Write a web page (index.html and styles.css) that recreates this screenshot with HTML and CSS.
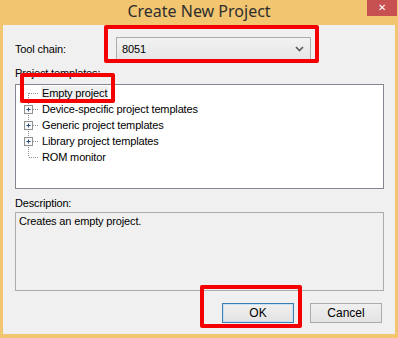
FILE: index.html
```html
<!DOCTYPE html>
<html lang="en">
<head>
  <meta charset="UTF-8" />
  <title>Create New Project</title>
  <link rel="stylesheet" href="styles.css">
</head>
<body>
  <div class="window">
    <div class="titlebar">
      <span></span>
      <span class="title">Create New Project</span>
      <span class="close">&#x2715;</span>
    </div>
    <div class="panel">
      <div class="row">
        <label class="lbl">Tool chain:</label>
        <div class="select">
          <span>8051</span>
          <svg width="9" height="6" viewBox="0 0 9 6"><path d="M1 1 L4.5 4.5 L8 1" fill="none" stroke="#5a5a5a" stroke-width="1.6"/></svg>
        </div>
      </div>

      <div class="lbl top">Project templates:</div>
      <div class="tree">
        <div class="node">
          <svg class="gut" width="24" height="16"><path d="M12.5 8 V16 M13 8.5 H23" stroke="#8c8c8c" stroke-dasharray="1 1" fill="none"/></svg>
          <span class="sel">Empty project</span>
        </div>
        <div class="node">
          <svg class="gut" width="24" height="16"><path d="M12.5 0 V16 M17 8.5 H23" stroke="#8c8c8c" stroke-dasharray="1 1" fill="none"/><rect x="8.5" y="4.5" width="8" height="8" fill="#fafafa" stroke="#8e8f8f"/><path d="M10.5 8.5 H14.5 M12.5 6.5 V10.5" stroke="#2c4b7e"/></svg>
          <span>Device-specific project templates</span>
        </div>
        <div class="node">
          <svg class="gut" width="24" height="16"><path d="M12.5 0 V16 M17 8.5 H23" stroke="#8c8c8c" stroke-dasharray="1 1" fill="none"/><rect x="8.5" y="4.5" width="8" height="8" fill="#fafafa" stroke="#8e8f8f"/><path d="M10.5 8.5 H14.5 M12.5 6.5 V10.5" stroke="#2c4b7e"/></svg>
          <span>Generic project templates</span>
        </div>
        <div class="node">
          <svg class="gut" width="24" height="16"><path d="M12.5 0 V16 M17 8.5 H23" stroke="#8c8c8c" stroke-dasharray="1 1" fill="none"/><rect x="8.5" y="4.5" width="8" height="8" fill="#fafafa" stroke="#8e8f8f"/><path d="M10.5 8.5 H14.5 M12.5 6.5 V10.5" stroke="#2c4b7e"/></svg>
          <span>Library project templates</span>
        </div>
        <div class="node">
          <svg class="gut" width="24" height="16"><path d="M12.5 0 V8 M13 8.5 H23" stroke="#8c8c8c" stroke-dasharray="1 1" fill="none"/></svg>
          <span>ROM monitor</span>
        </div>
      </div>

      <div class="lbl desc-lbl">Description:</div>
      <div class="desc">Creates an empty project.</div>

      <div class="buttons">
        <button class="btn default">OK</button>
        <button class="btn">Cancel</button>
      </div>

      <!-- red annotation marks drawn over the dialog -->
      <div class="mark mark-chain"></div>
      <div class="mark mark-empty"></div>
      <div class="mark mark-ok"></div>
    </div>
  </div>
</body>
</html>
```

FILE: styles.css
```css
* { box-sizing: border-box; margin: 0; padding: 0; }
body {
  background: #f2c671; color: #000;
  font-family: 'Liberation Sans', Arial, sans-serif;
  font-size: 11px; letter-spacing: -0.15px;
}
.window { width: 398px; height: 338px; display: flex; flex-direction: column; }
.titlebar {
  height: 25px; display: grid;
  grid-template-columns: 1fr auto 1fr; align-items: start;
}
.title {
  font-family: 'Noto Sans', sans-serif; font-size: 16px; letter-spacing: 0;
  color: #2e2e2e; line-height: 23px;
}
.close {
  justify-self: end; width: 30px; height: 16px; margin-right: 1px;
  background: #c75050; color: #fff; font-size: 10px; font-weight: bold;
  text-align: center; line-height: 16px; font-family: 'DejaVu Sans', sans-serif;
}
.panel {
  position: relative; flex: 1;
  margin: 0 3px 4px 3px; background: #f0f0f0;
  padding: 12px 11px 0 12px;
}
.row { display: flex; align-items: center; height: 23px; }
.row .lbl { width: 101px; }
.select {
  width: 195px; height: 23px; display: flex; align-items: center;
  justify-content: space-between; padding: 0 5px;
  border: 1px solid #acacac;
  background: linear-gradient(#f2f2f2, #e6e6e6);
}
.select svg { margin-right: 1px; }
.lbl { line-height: 14px; }
.top { margin-top: 6px; }
.tree {
  margin-top: 4px; height: 105px; background: #fff;
  border: 1px solid #828790;
}
.node { display: flex; align-items: center; height: 16px; }
.gut { flex: none; }
.node span { margin-left: 1px; padding: 0 1px; line-height: 15px; }
.node .sel { background: #f0f0f0; }
.desc-lbl { margin-top: 7px; }
.desc {
  margin-top: 2px; height: 79px; padding: 2px 3px;
  border: 1px solid #adadad; background: #f0f0f0;
}
.buttons {
  display: flex; justify-content: flex-end; gap: 16px;
  margin-top: 12px; padding-right: 2px;
}
.btn {
  width: 72px; height: 20px; font: inherit; font-size: 12px;
  border: 1px solid #acacac;
  background: linear-gradient(#f0f0f0, #e3e3e3);
}
.btn.default { border-color: #3c7fb1; box-shadow: inset 0 0 0 1px #c8e1f5; }
.mark {
  position: absolute; border: 4px solid #f50000; border-radius: 2px;
}
.mark-chain { left: 101px; top: 0; width: 215px; height: 38px; }
.mark-empty { left: 17px; top: 48px; width: 95px; height: 30px; }
.mark-ok { left: 197px; top: 260px; width: 102px; height: 43px; }
```
